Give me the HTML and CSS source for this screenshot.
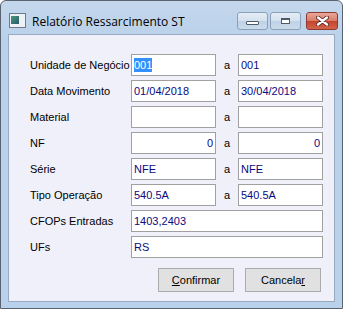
FILE: index.html
```html
<!doctype html>
<html>
<head>
<meta charset="utf-8">
<title>Relatório Ressarcimento ST</title>
<link rel="stylesheet" href="styles.css">
</head>
<body>
<div class="win">
	<div class="titlebar">
		<span class="appico"><i></i></span>
		<span class="title">Relatório Ressarcimento ST</span>
		<span class="caps">
			<span class="cap"><b class="min"></b></span>
			<span class="cap"><b class="max"></b></span>
			<span class="cap close">
				<svg width="13" height="10" viewBox="0 0 13 10"><path d="M2 1.5 L11 8.5 M11 1.5 L2 8.5" stroke="#5a2018" stroke-width="4" stroke-linecap="round"/><path d="M2 1.5 L11 8.5 M11 1.5 L2 8.5" stroke="#fff" stroke-width="2.4" stroke-linecap="round"/></svg>
			</span>
		</span>
	</div>
	<div class="client">
		<div class="form">
			<label>Unidade de Negócio</label><span class="fld"><em>001</em></span><span class="a">a</span><span class="fld">001</span>
			<label>Data Movimento</label><span class="fld">01/04/2018</span><span class="a">a</span><span class="fld">30/04/2018</span>
			<label>Material</label><span class="fld"></span><span class="a">a</span><span class="fld"></span>
			<label>NF</label><span class="fld num">0</span><span class="a">a</span><span class="fld num">0</span>
			<label>Série</label><span class="fld">NFE</span><span class="a">a</span><span class="fld">NFE</span>
			<label>Tipo Operação</label><span class="fld">540.5A</span><span class="a">a</span><span class="fld">540.5A</span>
			<label>CFOPs Entradas</label><span class="fld wide">1403,2403</span>
			<label>UFs</label><span class="fld wide">RS</span>
		</div>
		<div class="btns">
			<span class="btn"><u>C</u>onfirmar</span>
			<span class="btn">Cancela<u>r</u></span>
		</div>
	</div>
</div>
</body>
</html>
```
FILE: styles.css
```css
body{ margin:0; background:#fff; font-family:"Liberation Sans", Arial, sans-serif; font-size:11px;}
.win{ width:341px; height:307px; border:1px solid #5a6470; border-radius:6px 6px 0 0; background:linear-gradient(#c4d7ec, #b9d1ea 40px); display:flex; flex-direction:column; box-shadow:0 1px 0 #1e5a66;}
.titlebar{ height:33px; display:flex; align-items:center; padding:0 0 0 8px;}
.appico{ width:15px; height:13px; border:1px solid #6d7b8a; background:#eef2f6; margin-top:6px; position:relative;}
.appico i{ position:absolute; left:1px; top:2px; width:8px; height:8px; background:linear-gradient(135deg,#4a9a7a,#2a5a6a);}
.title{ font-family:"Open Sans", sans-serif; font-size:12px; color:#000; margin-left:6px; margin-top:7px;}
.caps{ margin-left:auto; display:flex; gap:2px; margin-right:4px; margin-top:7px;}
.cap{ width:29px; height:16px; border:1px solid #8aa0b8; border-radius:3px; background:linear-gradient(#e6eef7, #d3e0ee 50%, #bed1e5 51%, #cadbec); display:flex; align-items:center; justify-content:center;}
.cap.close{ width:30px; margin-left:3px; border-color:#8c3a30; background:linear-gradient(#e9a99c, #d67a66 50%, #c4442c 51%, #d2644a);}
.min{ width:11px; height:2px; border:1px solid #4c5a6a; background:#fff; border-radius:1px; margin-top:3px;}
.max{ width:7px; height:3px; border:1px solid #4c5a6a; background:#fff; border-top-width:2px;}
.client{ margin:0 7px 6px 7px; flex:1; border:1px solid #96aac2; background:#f0f0fa; display:flex; flex-direction:column;}
.form{ display:grid; grid-template-columns:101px 85px 22px 85px; grid-auto-rows:22px; row-gap:4px; padding:19px 0 0 21px; align-items:center;}
.form label{ color:#000; font-size:11px;}
.fld{ height:20px; border:1px solid #a0a0a0; background:#fff; color:#0a0a80; line-height:20px; padding:0 2px; box-sizing:content-box; width:79px; white-space:nowrap; overflow:hidden;}
.fld em{ font-style:normal; background:#3390ff; color:#fff; padding:1px 0;}
.fld.num{ text-align:right;}
.fld.wide{ grid-column:2 / span 3; width:186px;}
.a{ text-align:center; color:#000;}
.btns{ display:flex; justify-content:flex-end; gap:11px; padding:10px 13px 0 0;}
.btn{ width:74px; height:22px; border:1px solid #acacac; background:#e1e1e1; display:flex; align-items:center; justify-content:center; color:#000; font-size:11px;}
```
